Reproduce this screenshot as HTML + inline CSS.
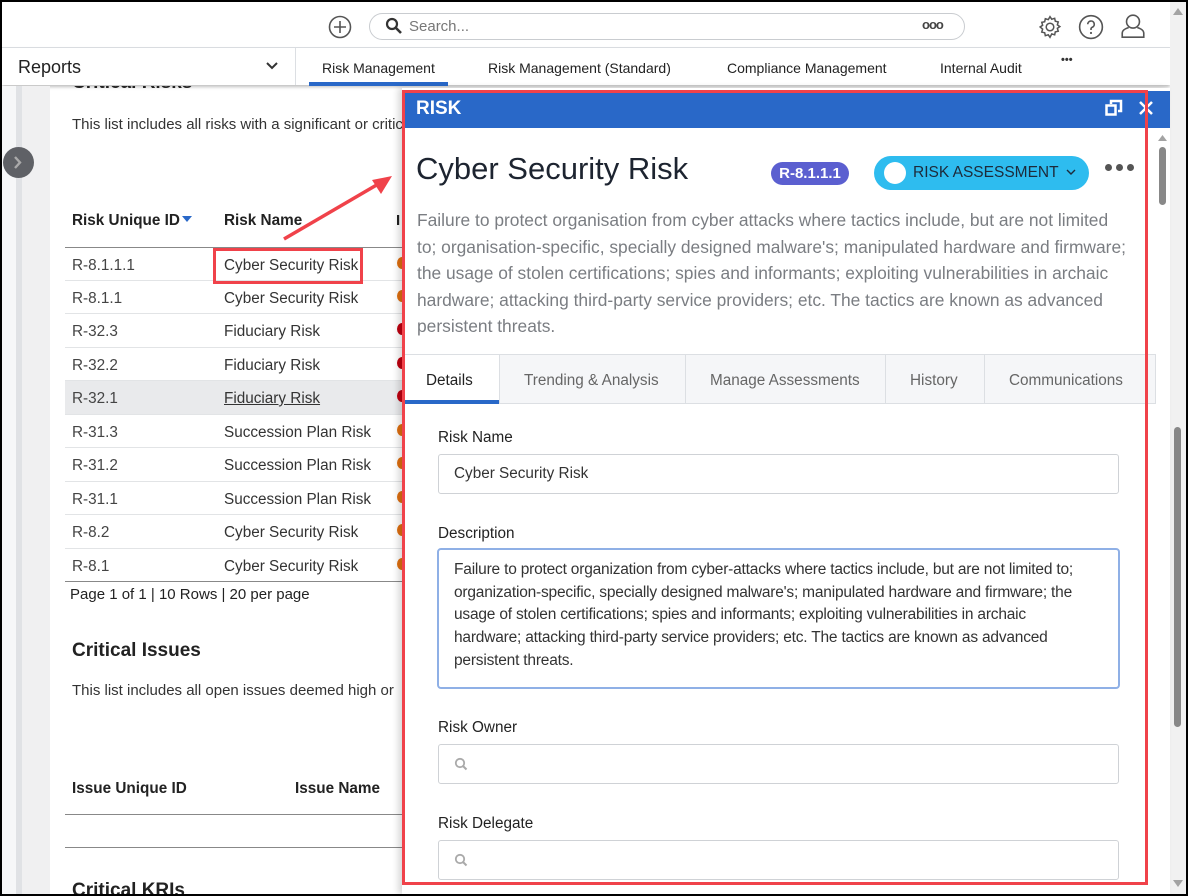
<!DOCTYPE html>
<html><head><meta charset="utf-8"><style>
*{margin:0;padding:0;box-sizing:border-box}
body{width:1188px;height:896px;overflow:hidden;background:#000;font-family:"Liberation Sans",sans-serif;position:relative}
.frame{position:absolute;left:2px;top:2px;width:1184px;height:892px;background:#fff;overflow:hidden}
.abs{position:absolute}
.t{position:absolute;white-space:nowrap}
</style></head><body>
<div class="frame">
<!-- top bar -->
<div class="abs" style="left:0;top:0;width:1168px;height:46px;background:#fff;border-bottom:1px solid #dcdfe3"></div>
<svg class="abs" style="left:326px;top:13px" width="24" height="24" viewBox="0 0 24 24"><circle cx="12" cy="12" r="10.5" fill="none" stroke="#555" stroke-width="1.6"/><path d="M12 6v12M6 12h12" stroke="#555" stroke-width="1.6"/></svg>
<div class="abs" style="left:367px;top:11px;width:596px;height:27px;border:1px solid #c9ccd0;border-radius:14px"></div>
<svg class="abs" style="left:383px;top:15px" width="18" height="18" viewBox="0 0 18 18"><circle cx="7" cy="7" r="5" fill="none" stroke="#333" stroke-width="2.2"/><path d="M11 11l5 5" stroke="#333" stroke-width="2.6"/></svg>
<div class="t" style="left:407px;top:16px;font-size:15px;color:#777">Search...</div>
<div class="t" style="left:920px;top:15px;font-size:13px;color:#444;letter-spacing:-1px;font-weight:bold">ooo</div>
<svg class="abs" style="left:1035px;top:12px" width="26" height="26" viewBox="0 0 24 24"><path d="M12 2.5l1.6 2.3 2.7-.8.6 2.7 2.7.6-.8 2.7 2.3 1.6-2.3 1.6.8 2.7-2.7.6-.6 2.7-2.7-.8L12 21.5l-1.6-2.3-2.7.8-.6-2.7-2.7-.6.8-2.7L2.9 12l2.3-1.6-.8-2.7 2.7-.6.6-2.7 2.7.8z" fill="none" stroke="#555" stroke-width="1.4"/><circle cx="12" cy="12" r="3.5" fill="none" stroke="#555" stroke-width="1.4"/></svg>
<svg class="abs" style="left:1076px;top:12px" width="26" height="26" viewBox="0 0 24 24"><circle cx="12" cy="12" r="10.5" fill="none" stroke="#555" stroke-width="1.5"/><path d="M9 9.5a3 3 0 1 1 4 2.8c-.8.4-1 .9-1 1.7v.8" fill="none" stroke="#555" stroke-width="1.5"/><circle cx="12" cy="17.5" r="1" fill="#555"/></svg>
<svg class="abs" style="left:1118px;top:11px" width="26" height="28" viewBox="0 0 24 26"><circle cx="12" cy="8" r="6" fill="none" stroke="#555" stroke-width="1.5"/><path d="M8 13.5c-3 1-6 2.5-6 5v4h20v-4c0-2.5-3-4-6-5" fill="none" stroke="#555" stroke-width="1.5"/></svg>
<!-- nav bar -->
<div class="abs" style="left:0;top:46px;width:1168px;height:37px;background:#fff;box-shadow:0 2px 3px rgba(0,0,0,.25)"></div>
<div class="abs" style="left:293px;top:46px;width:1px;height:37px;background:#dcdfe3"></div>
<div class="t" style="left:16px;top:55px;font-size:18px;color:#222">Reports</div>
<svg class="abs" style="left:263px;top:59px" width="14" height="10" viewBox="0 0 14 10"><path d="M2 2l5 5 5-5" fill="none" stroke="#333" stroke-width="2"/></svg>
<div class="t" style="left:320px;top:58px;font-size:14px;color:#222">Risk Management</div>
<div class="abs" style="left:307px;top:80px;width:139px;height:4px;background:#2968c8"></div>
<div class="t" style="left:486px;top:58px;font-size:14px;color:#222">Risk Management (Standard)</div>
<div class="t" style="left:725px;top:58px;font-size:14px;color:#222">Compliance Management</div>
<div class="t" style="left:938px;top:58px;font-size:14px;color:#222">Internal Audit</div>
<div class="t" style="left:1059px;top:52px;font-size:11px;color:#333;font-weight:bold">•••</div>
<!-- sidebar -->
<div class="abs" style="left:0;top:84px;width:48px;height:808px;background:#f0f0f1"></div>
<div class="abs" style="left:14px;top:84px;width:6px;height:808px;background:#e0e2e5"></div>
<div class="abs" style="left:0;top:84px;width:14px;height:808px;background:#f6f7f8"></div>
<div class="abs" style="left:1px;top:145px;width:31px;height:31px;border-radius:50%;background:#5f6166"></div>
<svg class="abs" style="left:10px;top:153px" width="12" height="15" viewBox="0 0 12 15"><path d="M3 2l5 5.5-5 5.5" fill="none" stroke="#aaa" stroke-width="2.4"/></svg>
<!-- content -->
<div class="t" style="left:70px;top:70px;font-size:19px;font-weight:bold;color:#222;clip-path:inset(14px 0 0 0)">Critical Risks</div>
<div class="t" style="left:70px;top:114px;font-size:15px;color:#333">This list includes all risks with a significant or critical</div>
<div class="t" style="left:70px;top:210px;font-size:15.3px;font-weight:bold;color:#222">Risk Unique ID</div>
<svg class="abs" style="left:180px;top:214px" width="10" height="6"><path d="M0 0h10L5 6z" fill="#2968c8"/></svg>
<div class="t" style="left:222px;top:210px;font-size:15.3px;font-weight:bold;color:#222">Risk Name</div>
<div class="t" style="left:394px;top:210px;font-size:15px;font-weight:bold;color:#222">I</div>
<div class="abs" style="left:63px;top:245px;width:340px;height:1px;background:#888"></div>
<div class="abs" style="left:63px;top:379px;width:340px;height:33px;background:#e9eaec"></div>
<div class="t" style="left:70px;top:256px;font-size:15.3px;color:#444;line-height:1">R-8.1.1.1</div>
<div class="t" style="left:222px;top:256px;font-size:15.3px;color:#333;line-height:1">Cyber Security Risk</div>
<div class="t" style="left:70px;top:289px;font-size:15.3px;color:#444;line-height:1">R-8.1.1</div>
<div class="t" style="left:222px;top:289px;font-size:15.3px;color:#333;line-height:1">Cyber Security Risk</div>
<div class="t" style="left:70px;top:322px;font-size:15.3px;color:#444;line-height:1">R-32.3</div>
<div class="t" style="left:222px;top:322px;font-size:15.3px;color:#333;line-height:1">Fiduciary Risk</div>
<div class="t" style="left:70px;top:356px;font-size:15.3px;color:#444;line-height:1">R-32.2</div>
<div class="t" style="left:222px;top:356px;font-size:15.3px;color:#333;line-height:1">Fiduciary Risk</div>
<div class="t" style="left:70px;top:389px;font-size:15.3px;color:#444;line-height:1">R-32.1</div>
<div class="t" style="left:222px;top:389px;font-size:15.3px;color:#333;line-height:1;text-decoration:underline">Fiduciary Risk</div>
<div class="t" style="left:70px;top:423px;font-size:15.3px;color:#444;line-height:1">R-31.3</div>
<div class="t" style="left:222px;top:423px;font-size:15.3px;color:#333;line-height:1">Succession Plan Risk</div>
<div class="t" style="left:70px;top:456px;font-size:15.3px;color:#444;line-height:1">R-31.2</div>
<div class="t" style="left:222px;top:456px;font-size:15.3px;color:#333;line-height:1">Succession Plan Risk</div>
<div class="t" style="left:70px;top:490px;font-size:15.3px;color:#444;line-height:1">R-31.1</div>
<div class="t" style="left:222px;top:490px;font-size:15.3px;color:#333;line-height:1">Succession Plan Risk</div>
<div class="t" style="left:70px;top:523px;font-size:15.3px;color:#444;line-height:1">R-8.2</div>
<div class="t" style="left:222px;top:523px;font-size:15.3px;color:#333;line-height:1">Cyber Security Risk</div>
<div class="t" style="left:70px;top:557px;font-size:15.3px;color:#444;line-height:1">R-8.1</div>
<div class="t" style="left:222px;top:557px;font-size:15.3px;color:#333;line-height:1">Cyber Security Risk</div>
<div class="abs" style="left:63px;top:278px;width:340px;height:1px;background:#e2e4e6"></div>
<div class="abs" style="left:63px;top:311px;width:340px;height:1px;background:#e2e4e6"></div>
<div class="abs" style="left:63px;top:345px;width:340px;height:1px;background:#e2e4e6"></div>
<div class="abs" style="left:63px;top:378px;width:340px;height:1px;background:#e2e4e6"></div>
<div class="abs" style="left:63px;top:412px;width:340px;height:1px;background:#e2e4e6"></div>
<div class="abs" style="left:63px;top:445px;width:340px;height:1px;background:#e2e4e6"></div>
<div class="abs" style="left:63px;top:479px;width:340px;height:1px;background:#e2e4e6"></div>
<div class="abs" style="left:63px;top:512px;width:340px;height:1px;background:#e2e4e6"></div>
<div class="abs" style="left:63px;top:546px;width:340px;height:1px;background:#e2e4e6"></div>
<div class="abs" style="left:63px;top:579px;width:340px;height:1px;background:#888"></div>
<div class="abs" style="left:395px;top:255px;width:10px;height:12px;border-radius:50%;background:#e07010"></div>
<div class="abs" style="left:395px;top:288px;width:10px;height:12px;border-radius:50%;background:#e07010"></div>
<div class="abs" style="left:395px;top:321px;width:10px;height:12px;border-radius:50%;background:#c00010"></div>
<div class="abs" style="left:395px;top:355px;width:10px;height:12px;border-radius:50%;background:#c00010"></div>
<div class="abs" style="left:395px;top:388px;width:10px;height:12px;border-radius:50%;background:#c00010"></div>
<div class="abs" style="left:395px;top:422px;width:10px;height:12px;border-radius:50%;background:#e07010"></div>
<div class="abs" style="left:395px;top:455px;width:10px;height:12px;border-radius:50%;background:#e07010"></div>
<div class="abs" style="left:395px;top:489px;width:10px;height:12px;border-radius:50%;background:#e07010"></div>
<div class="abs" style="left:395px;top:522px;width:10px;height:12px;border-radius:50%;background:#e07010"></div>
<div class="abs" style="left:395px;top:556px;width:10px;height:12px;border-radius:50%;background:#e07010"></div>
<div class="t" style="left:68px;top:584px;font-size:15px;color:#222">Page 1 of 1 | 10 Rows | 20 per page</div>
<div class="t" style="left:70px;top:638px;font-size:19px;font-weight:bold;color:#222">Critical Issues</div>
<div class="t" style="left:70px;top:680px;font-size:15px;color:#333">This list includes all open issues deemed high or</div>
<div class="t" style="left:70px;top:778px;font-size:15.3px;font-weight:bold;color:#222">Issue Unique ID</div>
<div class="t" style="left:293px;top:778px;font-size:15.3px;font-weight:bold;color:#222">Issue Name</div>
<div class="abs" style="left:63px;top:812px;width:340px;height:1px;background:#888"></div>
<div class="abs" style="left:63px;top:845px;width:340px;height:1px;background:#888"></div>
<div class="t" style="left:70px;top:878px;font-size:19px;font-weight:bold;color:#222">Critical KRIs</div>
<!-- red box + arrow -->
<div class="abs" style="left:211px;top:246px;width:150px;height:36px;border:3px solid #f0424a"></div>
<svg class="abs" style="left:270px;top:165px" width="130" height="80" viewBox="0 0 130 80"><path d="M12 72L108 16" stroke="#f0424a" stroke-width="3.5"/><path d="M120 9L100 13l9 14z" fill="#f0424a"/></svg>
<!-- outer scrollbar -->
<div class="abs" style="left:1168px;top:0;width:16px;height:892px;background:#f1f1f1"></div>
<svg class="abs" style="left:1171px;top:6px" width="10" height="7"><path d="M0 7h10L5 0z" fill="#a3a3a3"/></svg>
<div class="abs" style="left:1172px;top:425px;width:7px;height:300px;border-radius:4px;background:#888"></div>
<svg class="abs" style="left:1171px;top:878px" width="10" height="7"><path d="M0 0h10L5 7z" fill="#a3a3a3"/></svg>
<!-- panel -->
<div class="abs" style="left:400px;top:86px;width:768px;height:806px;background:#fff;box-shadow:-4px 0 6px rgba(0,0,0,.15)"></div>
<div class="abs" style="left:400px;top:89px;width:768px;height:37px;background:#2968c8"></div>
<div class="t" style="left:414px;top:96px;font-size:19px;font-weight:bold;color:#fff">RISK</div>
<svg class="abs" style="left:1103px;top:97px" width="18" height="18" viewBox="0 0 18 18"><rect x="1.5" y="6.5" width="9" height="9" fill="none" stroke="#fff" stroke-width="2.5"/><path d="M6 5V2h10v10h-3" fill="none" stroke="#fff" stroke-width="2.5"/></svg>
<svg class="abs" style="left:1135px;top:97px" width="18" height="18" viewBox="0 0 18 18"><path d="M3 3l12 12M15 3L3 15" stroke="#fff" stroke-width="2.5"/></svg>
<div class="abs" style="left:1156px;top:130px;width:10px;height:760px;background:#fff"></div>
<div class="abs" style="left:1157px;top:145px;width:7px;height:58px;border-radius:4px;background:#888"></div>
<svg class="abs" style="left:1156px;top:133px" width="9" height="6"><path d="M0 6h9L4.5 0z" fill="#a3a3a3"/></svg>
<div class="t" style="left:414px;top:149px;font-size:31px;color:#1d2430">Cyber Security Risk</div>
<div class="abs" style="left:769px;top:160px;width:78px;height:23px;border-radius:12px;background:#5b5fd0;color:#fff;font-size:15px;font-weight:bold;text-align:center;line-height:23px">R-8.1.1.1</div>
<div class="abs" style="left:872px;top:154px;width:215px;height:34px;border-radius:17px;background:#2ebcef"></div>
<div class="abs" style="left:882px;top:160px;width:22px;height:22px;border-radius:50%;background:#fff"></div>
<div class="t" style="left:911px;top:162px;font-size:15.5px;color:#1d2a3a">RISK ASSESSMENT</div>
<svg class="abs" style="left:1064px;top:167px" width="10" height="7"><path d="M1 1l4 4 4-4" fill="none" stroke="#1d2a3a" stroke-width="1.4"/></svg>
<div class="abs" style="left:1103px;top:162px;width:7px;height:7px;border-radius:50%;background:#555"></div>
<div class="abs" style="left:1114px;top:162px;width:7px;height:7px;border-radius:50%;background:#555"></div>
<div class="abs" style="left:1125px;top:162px;width:7px;height:7px;border-radius:50%;background:#555"></div>
<div class="abs" style="left:415px;top:205px;font-size:17.4px;line-height:26.6px;color:#7a7d82;white-space:nowrap">Failure to protect organisation from cyber attacks where tactics include, but are not limited<br>to; organisation-specific, specially designed malware's; manipulated hardware and firmware;<br>the usage of stolen certifications; spies and informants; exploiting vulnerabilities in archaic<br>hardware; attacking third-party service providers; etc. The tactics are known as advanced<br>persistent threats.</div>
<!-- tabs -->
<div class="abs" style="left:402px;top:352px;width:752px;height:50px;background:#f5f6f8;border:1px solid #dcdfe3"></div>
<div class="abs" style="left:402px;top:353px;width:95px;height:49px;background:#fff"></div>
<div class="abs" style="left:402px;top:398px;width:95px;height:4px;background:#2968c8"></div>
<div class="abs" style="left:497px;top:353px;width:1px;height:49px;background:#dcdfe3"></div>
<div class="abs" style="left:683px;top:353px;width:1px;height:49px;background:#dcdfe3"></div>
<div class="abs" style="left:883px;top:353px;width:1px;height:49px;background:#dcdfe3"></div>
<div class="abs" style="left:982px;top:353px;width:1px;height:49px;background:#dcdfe3"></div>
<div class="t" style="left:424px;top:370px;font-size:15.3px;color:#222">Details</div>
<div class="t" style="left:522px;top:370px;font-size:15.3px;color:#666">Trending &amp; Analysis</div>
<div class="t" style="left:708px;top:370px;font-size:15.3px;color:#666">Manage Assessments</div>
<div class="t" style="left:908px;top:370px;font-size:15.3px;color:#666">History</div>
<div class="t" style="left:1007px;top:370px;font-size:15.3px;color:#666">Communications</div>
<!-- form -->
<div class="t" style="left:436px;top:427px;font-size:15.3px;color:#222">Risk Name</div>
<div class="abs" style="left:436px;top:452px;width:681px;height:40px;border:1px solid #cfd2d6;border-radius:3px"></div>
<div class="t" style="left:452px;top:463px;font-size:15.3px;color:#333">Cyber Security Risk</div>
<div class="t" style="left:436px;top:523px;font-size:15.3px;color:#222">Description</div>
<div class="abs" style="left:435px;top:546px;width:683px;height:141px;border:2px solid #8fb0e6;border-radius:4px"></div>
<div class="abs" style="left:452px;top:557px;font-size:15.5px;line-height:22.7px;color:#333;white-space:nowrap;letter-spacing:-0.2px">Failure to protect organization from cyber-attacks where tactics include, but are not limited to;<br>organization-specific, specially designed malware's; manipulated hardware and firmware; the<br>usage of stolen certifications; spies and informants; exploiting vulnerabilities in archaic<br>hardware; attacking third-party service providers; etc. The tactics are known as advanced<br>persistent threats.</div>
<div class="t" style="left:436px;top:717px;font-size:15.3px;color:#222">Risk Owner</div>
<div class="abs" style="left:436px;top:742px;width:681px;height:40px;border:1px solid #cfd2d6;border-radius:3px"></div>
<svg class="abs" style="left:452px;top:755px" width="14" height="14" viewBox="0 0 14 14"><circle cx="6" cy="6" r="4.2" fill="none" stroke="#aaa" stroke-width="1.8"/><path d="M9 9l3.5 3.5" stroke="#aaa" stroke-width="2"/></svg>
<div class="t" style="left:436px;top:813px;font-size:15.3px;color:#222">Risk Delegate</div>
<div class="abs" style="left:436px;top:838px;width:681px;height:40px;border:1px solid #cfd2d6;border-radius:3px"></div>
<svg class="abs" style="left:452px;top:851px" width="14" height="14" viewBox="0 0 14 14"><circle cx="6" cy="6" r="4.2" fill="none" stroke="#aaa" stroke-width="1.8"/><path d="M9 9l3.5 3.5" stroke="#aaa" stroke-width="2"/></svg>
<!-- red panel outline -->
<div class="abs" style="left:400px;top:88px;width:746px;height:795px;border:3px solid #f0424a"></div>
</div>
</body></html>
